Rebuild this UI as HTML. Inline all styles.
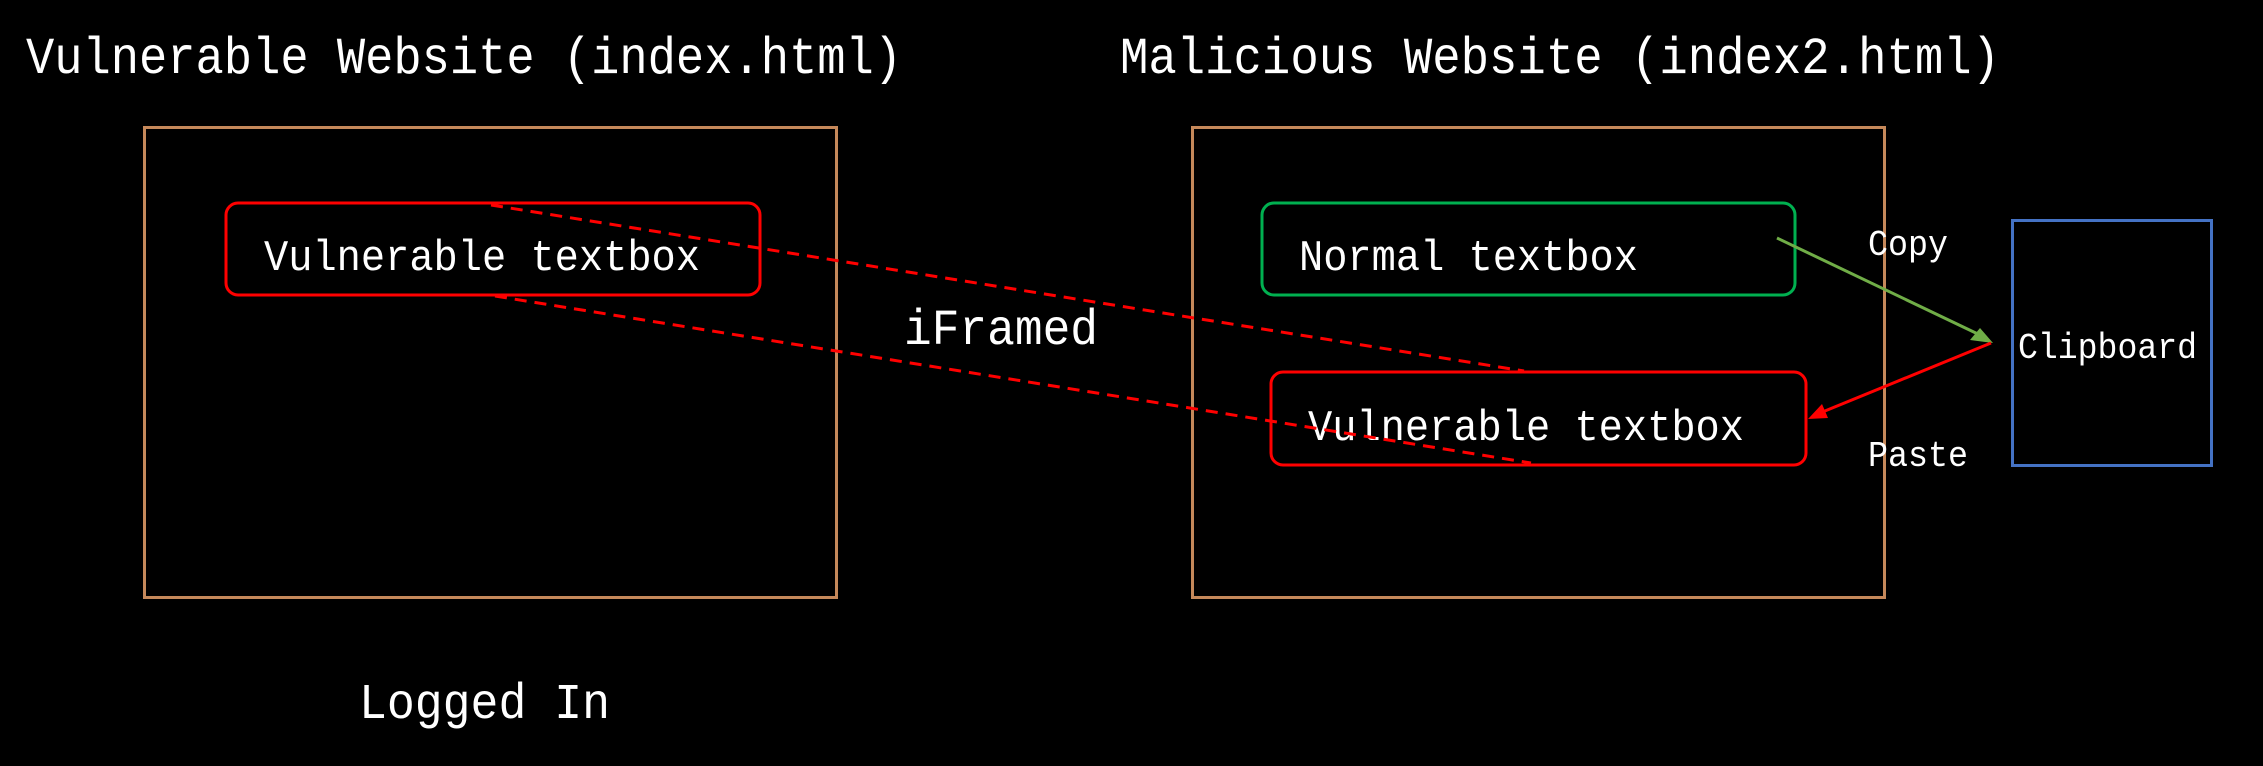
<!DOCTYPE html>
<html><head><meta charset="utf-8"><style>
html,body{margin:0;padding:0;background:#000;width:2263px;height:766px;overflow:hidden}
svg{display:block}
text{font-family:"Liberation Mono",monospace;fill:#fff}
</style></head><body>
<svg width="2263" height="766" viewBox="0 0 2263 766" xmlns="http://www.w3.org/2000/svg">
<text x="26" y="73" font-size="52" textLength="876" lengthAdjust="spacingAndGlyphs">Vulnerable Website (index.html)</text>
<text x="1120" y="73" font-size="52" textLength="880" lengthAdjust="spacingAndGlyphs">Malicious Website (index2.html)</text>
<rect x="144.5" y="127.5" width="692" height="470" fill="none" stroke="#c5885a" stroke-width="3"/>
<rect x="1192.5" y="127.5" width="692" height="470" fill="none" stroke="#c5885a" stroke-width="3"/>
<rect x="226" y="203" width="534" height="92" rx="12" fill="none" stroke="#ff0000" stroke-width="3"/>
<text x="264" y="270" font-size="44" textLength="436" lengthAdjust="spacingAndGlyphs">Vulnerable textbox</text>
<rect x="1262" y="203" width="533" height="92" rx="12" fill="none" stroke="#00b050" stroke-width="3"/>
<text x="1299" y="270" font-size="44" textLength="339" lengthAdjust="spacingAndGlyphs">Normal textbox</text>
<rect x="1271" y="372" width="535" height="93" rx="12" fill="none" stroke="#ff0000" stroke-width="3"/>
<text x="1308" y="440" font-size="44" textLength="436" lengthAdjust="spacingAndGlyphs">Vulnerable textbox</text>
<rect x="2012.5" y="220.5" width="199" height="245" fill="none" stroke="#4472c4" stroke-width="3"/>
<text x="2018" y="358" font-size="36" textLength="179" lengthAdjust="spacingAndGlyphs">Clipboard</text>
<text x="1868" y="255" font-size="36" textLength="80" lengthAdjust="spacingAndGlyphs">Copy</text>
<text x="1868" y="466" font-size="36" textLength="100" lengthAdjust="spacingAndGlyphs">Paste</text>
<text x="904" y="344" font-size="50" textLength="194" lengthAdjust="spacingAndGlyphs">iFramed</text>
<text x="359" y="718" font-size="50" textLength="251" lengthAdjust="spacingAndGlyphs">Logged In</text>
<line x1="491" y1="205" x2="1524" y2="371" stroke="#ff0000" stroke-width="3" stroke-dasharray="12,8"/>
<line x1="495" y1="296" x2="1531" y2="463" stroke="#ff0000" stroke-width="3" stroke-dasharray="12,8"/>
<line x1="1777" y1="238" x2="1980" y2="335" stroke="#70ad47" stroke-width="3"/>
<path d="M1993,343 L1970,340 L1980,328 Z" fill="#70ad47"/>
<line x1="1991" y1="343" x2="1820" y2="413" stroke="#ff0000" stroke-width="3"/>
<path d="M1808,419 L1822,404 L1828,418 Z" fill="#ff0000"/>
</svg>
</body></html>
